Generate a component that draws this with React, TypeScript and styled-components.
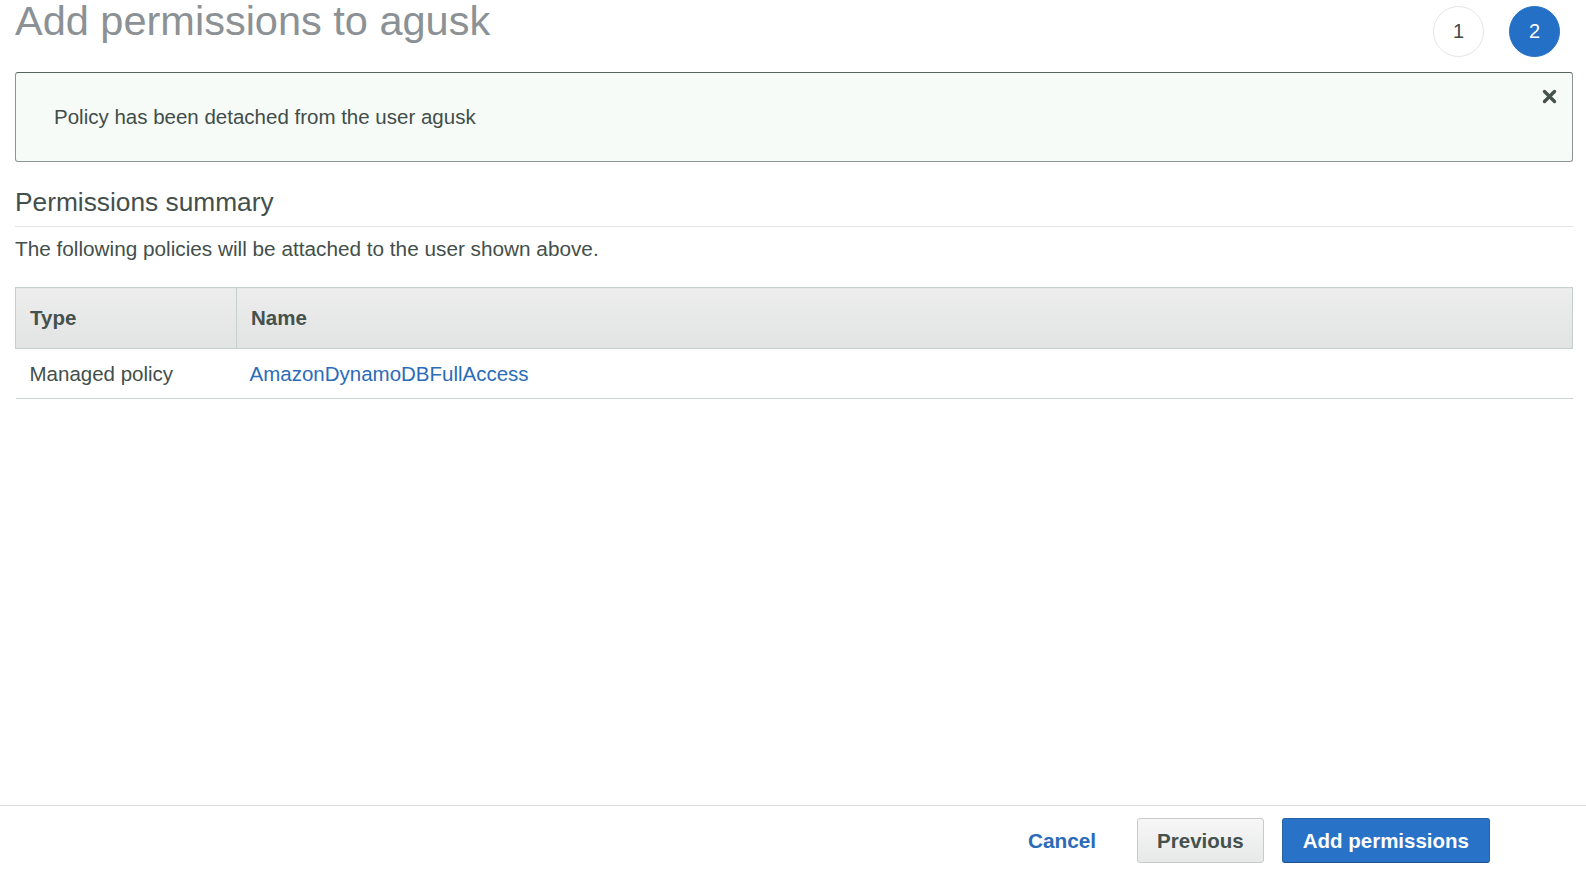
import React from "react";
import styled, { createGlobalStyle } from "styled-components";

const GlobalStyle = createGlobalStyle`
  html, body {
    margin: 0;
    padding: 0;
    background: #ffffff;
  }
  body {
    font-family: "Liberation Sans", Arial, Helvetica, sans-serif;
    color: #434f4b;
  }
  * { box-sizing: border-box; }
`;

const Page = styled.div`
  min-height: 100vh;
  display: flex;
  flex-direction: column;
`;

const Main = styled.main`
  flex: 1;
  padding: 0 13px 0 15px;
`;

const Header = styled.header`
  display: flex;
  justify-content: space-between;
  align-items: flex-start;
  height: 72px;
`;

const Title = styled.h1`
  margin: 0;
  font-size: 41.5px;
  line-height: 41.5px;
  font-weight: 400;
  color: #8b9194;
  letter-spacing: 0;
`;

const Steps = styled.ol`
  list-style: none;
  margin: 6px 13px 0 0;
  padding: 0;
  display: flex;
  gap: 25px;
`;

const Step = styled.li<{ $active?: boolean }>`
  width: 51px;
  height: 51px;
  border-radius: 50%;
  display: flex;
  align-items: center;
  justify-content: center;
  font-size: 20px;
  color: ${(p) => (p.$active ? "#ffffff" : "#3f4b48")};
  background: ${(p) => (p.$active ? "#2370c6" : "#ffffff")};
  border: 1.5px solid ${(p) => (p.$active ? "#2370c6" : "#e2e5e4")};
`;

const Alert = styled.div`
  display: flex;
  align-items: stretch;
  height: 90px;
  border: 1px solid #8c9592;
  border-top-color: #56625e;
  border-radius: 3px;
  background: #f6fbf8;
  padding: 0 14px 0 38px;
`;

const AlertMessage = styled.p`
  flex: 1;
  margin: 0;
  align-self: center;
  font-size: 20.5px;
  line-height: 24px;
  color: #414d49;
`;

const CloseButton = styled.button`
  align-self: flex-start;
  margin-top: 15px;
  padding: 0;
  width: 17px;
  height: 17px;
  border: 0;
  background: transparent;
  cursor: pointer;
  display: flex;
  align-items: center;
  justify-content: center;
`;

const SectionTitle = styled.h2`
  margin: 25px 0 0;
  padding-bottom: 9px;
  font-size: 26.3px;
  line-height: 30px;
  font-weight: 400;
  color: #434f4b;
  border-bottom: 1px solid #e2e6e5;
`;

const Description = styled.p`
  margin: 10px 0 0;
  font-size: 20.75px;
  line-height: 24px;
  color: #434f4b;
`;

const Table = styled.table`
  width: 100%;
  margin-top: 26px;
  border-collapse: collapse;
  font-size: 20.5px;
`;

const HeadCell = styled.th<{ $width?: number }>`
  height: 61px;
  text-align: left;
  font-weight: 700;
  color: #44514d;
  padding: 0 14px;
  background: linear-gradient(#ecedec, #e2e4e3);
  border: 1px solid #c8d0cd;
  width: ${(p) => (p.$width ? `${p.$width}px` : "auto")};
`;

const Cell = styled.td<{ $indent: number }>`
  height: 50px;
  padding: 0 13px 0 ${(p) => p.$indent}px;
  color: #434f4b;
  border-bottom: 1px solid #cdd4d2;
`;

const Link = styled.a`
  color: #2b6cb8;
  text-decoration: none;
  cursor: pointer;
`;

const Footer = styled.footer`
  height: 65px;
  border-top: 1px solid #d9dedc;
  display: flex;
  justify-content: flex-end;
  align-items: flex-start;
  gap: 18px;
  padding: 12px 96px 0 0;
`;

const BaseButton = styled.button`
  height: 45px;
  padding: 0 20px;
  font-family: "Liberation Sans", Arial, Helvetica, sans-serif;
  font-size: 20.5px;
  font-weight: 700;
  border-radius: 3px;
  cursor: pointer;
`;

const LinkButton = styled(BaseButton)`
  padding: 0 22px;
  font-size: 20.8px;
  border: 1px solid transparent;
  background: transparent;
  color: #2a6ab9;
`;

const SecondaryButton = styled(BaseButton)`
  padding: 0 19px;
  border: 1px solid #c6cbc9;
  background: linear-gradient(#f7f7f7, #e7e8e8);
  color: #44514d;
`;

const PrimaryButton = styled(BaseButton)`
  border: 1px solid #2a62a8;
  border-bottom-color: #1f4f8c;
  background: #2872c8;
  color: #ffffff;
`;

const CloseIcon = () => (
  <svg width="15" height="15" viewBox="0 0 15 15" aria-hidden="true">
    <path
      d="M2.5 2.5 L12.5 12.5 M12.5 2.5 L2.5 12.5"
      stroke="#46524e"
      strokeWidth="3.4"
      strokeLinecap="round"
    />
  </svg>
);

export default function App() {
  return (
    <Page>
      <GlobalStyle />
      <Main>
        <Header>
          <Title>Add permissions to agusk</Title>
          <Steps>
            <Step>1</Step>
            <Step $active>2</Step>
          </Steps>
        </Header>

        <Alert role="status">
          <AlertMessage>Policy has been detached from the user agusk</AlertMessage>
          <CloseButton aria-label="Dismiss">
            <CloseIcon />
          </CloseButton>
        </Alert>

        <SectionTitle>Permissions summary</SectionTitle>
        <Description>The following policies will be attached to the user shown above.</Description>

        <Table>
          <thead>
            <tr>
              <HeadCell $width={221}>Type</HeadCell>
              <HeadCell>Name</HeadCell>
            </tr>
          </thead>
          <tbody>
            <tr>
              <Cell $indent={14}>Managed policy</Cell>
              <Cell $indent={13}>
                <Link>AmazonDynamoDBFullAccess</Link>
              </Cell>
            </tr>
          </tbody>
        </Table>
      </Main>

      <Footer>
        <LinkButton>Cancel</LinkButton>
        <SecondaryButton>Previous</SecondaryButton>
        <PrimaryButton>Add permissions</PrimaryButton>
      </Footer>
    </Page>
  );
}
